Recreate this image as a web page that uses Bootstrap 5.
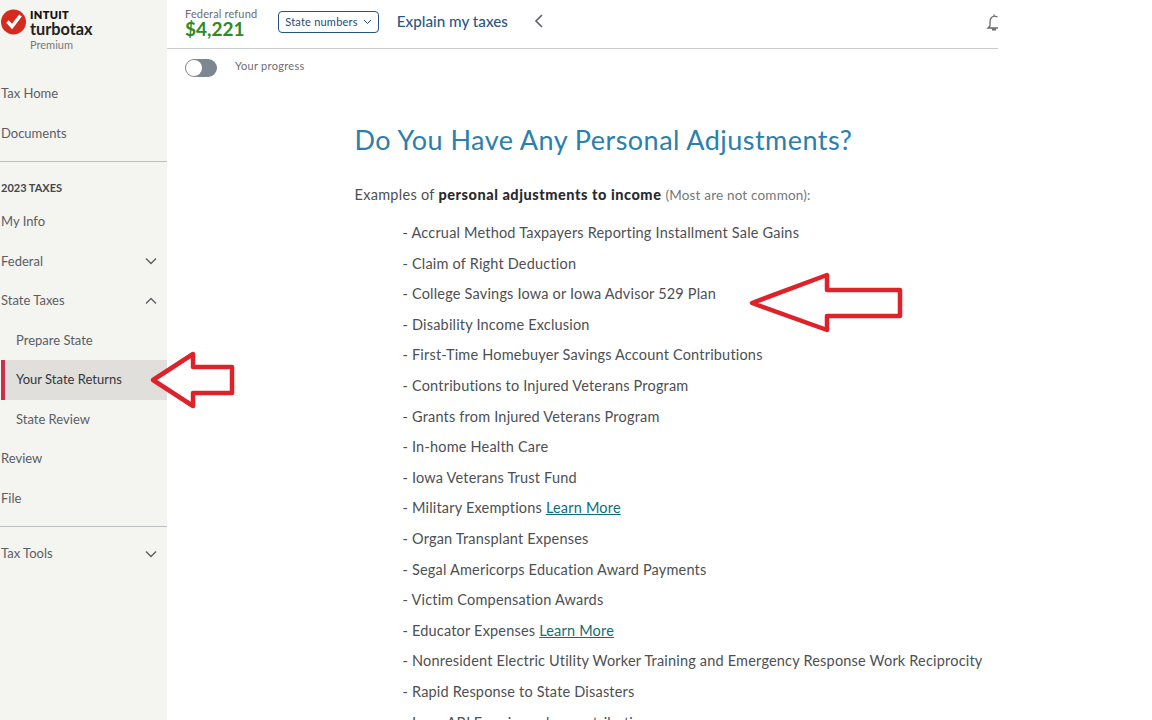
<!DOCTYPE html>
<html lang="en"><head><meta charset="utf-8"><title>TurboTax</title>
<link href="https://cdn.jsdelivr.net/npm/bootstrap@5.3.0/dist/css/bootstrap.min.css" rel="stylesheet">
<style>
html,body{height:720px;overflow:hidden;background:#fff}
body{font-family:Lato,"Liberation Sans",sans-serif;color:#393a3d;font-size:14px}
.tt-shell{height:720px}
.tt-side{width:167px;flex:none;background:#f4f4f1;height:720px}
.tt-brand{height:74px;padding:8px 0 0 1px}
.tt-brand svg{flex:none}
.tt-intuit{font:800 11px/11px Lato,sans-serif;color:#111;letter-spacing:.35px;margin-top:1px}
.tt-turbo{font:700 16.3px/16px Lato,sans-serif;color:#222;margin-top:1px}
.tt-prem{font-size:11px;color:#75787d;line-height:13px;margin:1px 0 0 29px}
.tt-nav{display:flex;align-items:center;justify-content:space-between;padding:0 10px 0 1px;color:#5b5e63;font-size:13px;height:39.5px;text-decoration:none}
.tt-nav.sub{padding-left:16px}
.tt-nav.on{background:#e0dfdb;color:#34363a;border-left:4px solid #c9304f;margin-left:1px;padding-left:11px}
.tt-rule{border-top:1px solid #babec5;margin:8px 0}
.tt-rule.tail{margin-bottom:7px}
.tt-yr{font-size:11px;font-weight:700;color:#45474b;padding-left:1px;height:26px;display:flex;align-items:flex-end;margin-bottom:6px}
.tt-main{width:831px;flex:none}
.tt-head{height:49px;border-bottom:1px solid #c9cbcf;padding:7px 0 0 18px;overflow:hidden}
.tt-ref{font-size:11px;line-height:13px;color:#6b6c72;letter-spacing:.15px}
.tt-amt{font-size:19px;font-weight:700;line-height:18px;color:#2e8b1f}
.tt-sel{height:22px;border:1px solid #28537f;border-radius:4px;color:#1f4a73;font-size:11px;padding:0 6px;margin:4px 18px 0 21px;gap:5px;letter-spacing:.22px}
.tt-exp{color:#2b5784;font-size:15.2px;font-weight:500;margin:3px 26px 0 0;text-decoration:none;letter-spacing:.02px}
.tt-ic{margin-top:7px}
.tt-prog{padding:10px 0 0 18px;height:58px}
.tt-tog{width:32px;height:18px;border-radius:9px;background:#7d8792;position:relative;flex:none}
.tt-tog::before{content:"";position:absolute;left:1px;top:1px;width:16px;height:16px;border-radius:50%;background:#fff}
.tt-pl{font-size:11px;color:#6b6c72;margin:-1px 0 0 18px;letter-spacing:.3px}
.tt-body{padding-left:187.5px;width:831px}
.tt-h{font-size:27px;font-weight:400;color:#2a80ac;line-height:32px;margin:17px 0 0;letter-spacing:.46px}
.tt-intro{margin:30px 0 0;line-height:18px;color:#4d4f53;font-size:14.5px;letter-spacing:.28px}
.tt-intro b{color:#2a2b2e;font-weight:900;letter-spacing:.55px}
.tt-intro span{color:#75777b;font-size:13.5px;letter-spacing:.18px}
.tt-list{list-style:none;margin:14px 0 0;padding:0 0 0 48px;white-space:nowrap}
.tt-list li{height:30.6px;line-height:30.6px;color:#4d4f53;font-size:14.5px;letter-spacing:.19px}
.tt-list a{color:#0c6f77}
.tt-arrow{position:absolute;overflow:visible}
</style></head><body>
<div class="tt-shell d-flex position-relative">
 <aside class="tt-side">
  <div class="tt-brand">
   <div class="d-flex gap-1">
    <svg width="25" height="27" viewBox="0 0 25 27"><circle cx="12.5" cy="14" r="12.5" fill="#d52b1e"/><path d="M6.5 13.5l4.5 5 8.5-11" fill="none" stroke="#fff" stroke-width="3.4"/></svg>
    <div><div class="tt-intuit">INTUIT</div><div class="tt-turbo">turbotax</div></div>
   </div>
   <div class="tt-prem">Premium</div>
  </div>
  <a class="tt-nav" href="#">Tax Home</a>
  <a class="tt-nav" href="#">Documents</a>
  <div class="tt-rule"></div>
  <div class="tt-yr">2023 TAXES</div>
  <a class="tt-nav" href="#">My Info</a>
  <a class="tt-nav" href="#">Federal<svg width="12" height="8" viewBox="0 0 12 8"><path d="M1 1.5l5 5 5-5" fill="none" stroke="#5c5f64" stroke-width="1.4"/></svg></a>
  <a class="tt-nav" href="#">State Taxes<svg width="12" height="8" viewBox="0 0 12 8"><path d="M1 6.5l5-5 5 5" fill="none" stroke="#5c5f64" stroke-width="1.4"/></svg></a>
  <a class="tt-nav sub" href="#">Prepare State</a>
  <a class="tt-nav sub on" href="#">Your State Returns</a>
  <a class="tt-nav sub" href="#">State Review</a>
  <a class="tt-nav" href="#">Review</a>
  <a class="tt-nav" href="#">File</a>
  <div class="tt-rule tail"></div>
  <a class="tt-nav" href="#">Tax Tools<svg width="12" height="8" viewBox="0 0 12 8"><path d="M1 1.5l5 5 5-5" fill="none" stroke="#5c5f64" stroke-width="1.4"/></svg></a>
 </aside>
 <main class="tt-main">
  <div class="tt-head d-flex align-items-start">
   <div><div class="tt-ref">Federal refund</div><div class="tt-amt">$4,221</div></div>
   <div class="tt-sel d-flex align-items-center">State numbers<svg width="9" height="6" viewBox="0 0 9 6"><path d="M1 1l3.5 3.5L8 1" fill="none" stroke="#1f4a73" stroke-width="1"/></svg></div>
   <a class="tt-exp" href="#">Explain my taxes</a>
   <svg class="tt-ic" width="10" height="14" viewBox="0 0 10 14"><path d="M8 1L2 7l6 6" fill="none" stroke="#5c5f64" stroke-width="1.6"/></svg>
   <svg class="tt-ic ms-auto" width="12" height="17" viewBox="0 0 12 17"><path d="M8 .5V2.5M11.5 3Q8 1 5.5 3.5Q4 5 4 8V12L2 14H12" fill="none" stroke="#66696e" stroke-width="1.3"/><path d="M6 15.5H10" stroke="#66696e" stroke-width="2"/></svg>
  </div>
  <div class="tt-prog d-flex align-items-start"><span class="tt-tog"></span><span class="tt-pl">Your progress</span></div>
  <div class="tt-body">
   <h1 class="tt-h">Do You Have Any Personal Adjustments?</h1>
   <p class="tt-intro">Examples of <b>personal adjustments to income</b> <span>(Most are not common):</span></p>
   <ul class="tt-list">
    <li>- Accrual Method Taxpayers Reporting Installment Sale Gains</li>
    <li>- Claim of Right Deduction</li>
    <li>- College Savings Iowa or Iowa Advisor 529 Plan</li>
    <li>- Disability Income Exclusion</li>
    <li>- First-Time Homebuyer Savings Account Contributions</li>
    <li>- Contributions to Injured Veterans Program</li>
    <li>- Grants from Injured Veterans Program</li>
    <li>- In-home Health Care</li>
    <li>- Iowa Veterans Trust Fund</li>
    <li>- Military Exemptions <a href="#">Learn More</a></li>
    <li>- Organ Transplant Expenses</li>
    <li>- Segal Americorps Education Award Payments</li>
    <li>- Victim Compensation Awards</li>
    <li>- Educator Expenses <a href="#">Learn More</a></li>
    <li>- Nonresident Electric Utility Worker Training and Emergency Response Work Reciprocity</li>
    <li>- Rapid Response to State Disasters</li>
    <li>- Iowa ABLE savings plan contributions</li>
   </ul>
  </div>
 </main>
 <svg class="tt-arrow" style="left:150px;top:351px" width="85" height="58" viewBox="0 0 85 58"><path d="M3 29L43 3V16H82V42H43V55Z" fill="#fff" stroke="#df2229" stroke-width="4.5" stroke-linejoin="round"/></svg>
 <svg class="tt-arrow" style="left:750px;top:272px" width="153" height="60" viewBox="0 0 153 60"><path d="M2 31L77 3V18H150V44H77V58Z" fill="#fff" stroke="#df2229" stroke-width="4.5" stroke-linejoin="round"/></svg>
</div>
<script src="https://cdn.jsdelivr.net/npm/bootstrap@5.3.0/dist/js/bootstrap.bundle.min.js"></script>
</body></html>
